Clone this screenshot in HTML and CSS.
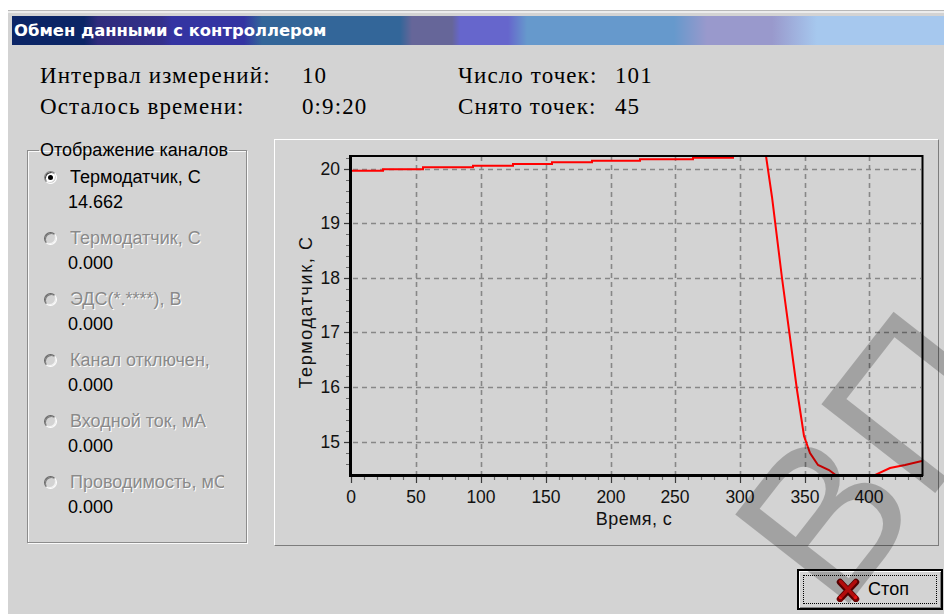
FILE: index.html
```html
<!DOCTYPE html>
<html lang="ru">
<head>
<meta charset="utf-8">
<title>Обмен данными с контроллером</title>
<link rel="stylesheet" href="styles.css">
</head>
<body>
<div class="window">
  <div class="titlebar">Обмен данными с контроллером</div>

  <div class="info">
    <span>Интервал измерений:</span><span>10</span><span>Число точек:</span><span>101</span>
    <span>Осталось времени:</span><span>0:9:20</span><span>Снято точек:</span><span>45</span>
  </div>

  <div class="main">
    <fieldset class="channels">
      <legend>Отображение каналов</legend>
      <div class="channel">
        <span class="radio checked"></span><span class="label">Термодатчик, С</span>
        <span class="value">14.662</span>
      </div>
      <div class="channel disabled">
        <span class="radio"></span><span class="label">Термодатчик, С</span>
        <span class="value">0.000</span>
      </div>
      <div class="channel disabled">
        <span class="radio"></span><span class="label">ЭДС(*.****), В</span>
        <span class="value">0.000</span>
      </div>
      <div class="channel disabled">
        <span class="radio"></span><span class="label">Канал отключен,</span>
        <span class="value">0.000</span>
      </div>
      <div class="channel disabled">
        <span class="radio"></span><span class="label">Входной ток, мА</span>
        <span class="value">0.000</span>
      </div>
      <div class="channel disabled">
        <span class="radio"></span><span class="label">Проводимость, мС</span>
        <span class="value">0.000</span>
      </div>
    </fieldset>

    <div class="chart-panel">
      <svg class="chart" width="663" height="405" viewBox="275 140 663 405">
        <defs>
          <clipPath id="plot-area"><rect x="351" y="156" width="571" height="319"/></clipPath>
        </defs>

        <!-- dashed grid -->
        <g class="grid">
          <path d="M344 169.5H921M344 223.5H921M344 278.5H921M344 332.5H921M344 387.5H921M344 442.5H921"/>
          <path d="M416.5 156V475M481.5 156V475M546.5 156V475M611.5 156V475M675.5 156V475M740.5 156V475M805.5 156V475M869.5 156V475"/>
        </g>

        <!-- minor ticks -->
        <path class="ticks" d="M346 158.5h3M346 180.5h3M346 191.5h3M346 202.5h3M346 213.5h3M346 234.5h3M346 245.5h3M346 256.5h3M346 267.5h3M346 289.5h3M346 300.5h3M346 311.5h3M346 322.5h3M346 343.5h3M346 354.5h3M346 365.5h3M346 376.5h3M346 398.5h3M346 409.5h3M346 420.5h3M346 431.5h3M346 453.5h3M346 464.5h3
          M364.5 477v3M377.5 477v3M390.5 477v3M403.5 477v3M429.5 477v3M442.5 477v3M455.5 477v3M468.5 477v3M494.5 477v3M507.5 477v3M520.5 477v3M533.5 477v3M559.5 477v3M572.5 477v3M585.5 477v3M598.5 477v3M624.5 477v3M637.5 477v3M649.5 477v3M662.5 477v3M688.5 477v3M701.5 477v3M714.5 477v3M727.5 477v3M753.5 477v3M766.5 477v3M779.5 477v3M792.5 477v3M818.5 477v3M831.5 477v3M843.5 477v3M856.5 477v3M882.5 477v3M895.5 477v3M908.5 477v3M920.5 477v3"/>
        <!-- major ticks -->
        <path class="ticks major" d="M344 169.5h5M344 223.5h5M344 278.5h5M344 332.5h5M344 387.5h5M344 442.5h5
          M351.5 477v6M416.5 477v6M481.5 477v6M546.5 477v6M611.5 477v6M675.5 477v6M740.5 477v6M805.5 477v6M869.5 477v6"/>

        <!-- measured temperature -->
        <polyline class="series" clip-path="url(#plot-area)" points="351,170.7 383,170.7 383,169.3 423,169.3 423,167.3 473,167.3 473,165.7 513,165.7 513,164 552,164 552,162.3 592,162.3 592,160.7 640,160.7 640,159.3 693,159.3 693,157.7 733,157.7 733,150 766,150 766,156 772,197 782,278 789,330 797,390 804,436 810,453 818,465 829,470 837,476 842,482 870,482 875,475 890,468 905,465 922,461"/>

        <!-- frame -->
        <path class="frame thin" d="M350 156H922.5V476"/>
        <path class="frame" d="M350.5 155V475.5H923"/>

        <!-- axis labels -->
        <g class="tick-label y">
          <text x="340" y="175">20</text>
          <text x="340" y="229">19</text>
          <text x="340" y="284">18</text>
          <text x="340" y="338">17</text>
          <text x="340" y="393">16</text>
          <text x="340" y="448">15</text>
        </g>
        <g class="tick-label x">
          <text x="351" y="503">0</text>
          <text x="416" y="503">50</text>
          <text x="481" y="503">100</text>
          <text x="546" y="503">150</text>
          <text x="611" y="503">200</text>
          <text x="675" y="503">250</text>
          <text x="740" y="503">300</text>
          <text x="805" y="503">350</text>
          <text x="869" y="503">400</text>
        </g>
        <text class="axis-title" x="634" y="525">Время, с</text>
        <text class="axis-title vertical" x="312" y="312" transform="rotate(-90 312 312)">Термодатчик, С</text>
      </svg>
    </div>
  </div>

  <div class="actions">
    <button class="btn-stop" type="button">
      <svg class="stop-icon" width="24" height="24" viewBox="0 0 24 24">
        <path class="x-shade" d="M4 4L20 21M20 4L4 21"/>
        <path class="x-face" d="M4.5 3.5L19.5 19.5M19.5 3.5L4.5 19.5"/>
      </svg>
      <span>Стоп</span>
    </button>
  </div>
</div>

<div class="watermark">ВП</div>
</body>
</html>
```

FILE: styles.css
```css
* {
  box-sizing: border-box;
}

html,
body {
  margin: 0;
  height: 100%;
}

body {
  position: relative;
  overflow: hidden;
  background: #ffffff;
  font-family: "Liberation Sans", Arial, sans-serif;
  color: #000;
}

/* dialog window */
.window {
  margin: 10px 0 0 8px;
  height: 604px;
  padding: 5px 0 0 4px;
  display: flex;
  flex-direction: column;
  background: #d3d3d3;
  border-top: 1px solid #b8b8b8;
  box-shadow: inset 0 2px 0 #ececec;
}

.titlebar {
  height: 29px;
  padding-left: 2px;
  display: flex;
  align-items: center;
  color: #fff;
  font-family: "DejaVu Sans", Verdana, sans-serif;
  font-weight: bold;
  font-size: 16.4px;
  white-space: nowrap;
  background: linear-gradient(90deg,
    #0b2566 0, #0b2566 72px,
    #2f2b7c 86px, #33308c 150px,
    #3434a2 160px, #3434a2 232px,
    #336699 250px, #336699 388px,
    #666699 400px, #666699 440px,
    #6666cc 448px, #6666cc 496px,
    #6699cc 515px, #6699cc 662px,
    #9999cc 695px, #9999cc 760px,
    #a6c8ee 805px, #a6c8ee 100%);
}

/* measurement summary */
.info {
  margin-top: 15px;
  padding-left: 28px;
  display: grid;
  grid-template-columns: 262px 156px 157px auto;
  grid-auto-rows: 31px;
  align-items: center;
  font-family: "Liberation Serif", "Times New Roman", serif;
  font-size: 23px;
  letter-spacing: 1.1px;
  white-space: nowrap;
}

.main {
  margin-top: 17px;
  display: flex;
  align-items: flex-start;
  gap: 27px;
}

/* channel selector group box */
.channels {
  margin: 1px 0 0 15px;
  width: 220px;
  height: 403px;
  padding: 5px 0 0 16px;
  border: 1px solid #8c8c8c;
  box-shadow: 1px 1px 0 #fafafa, inset 1px 1px 0 #fafafa;
  font-size: 18px;
}

.channels legend {
  padding: 0 1px;
  margin-left: -5px;
  line-height: 20px;
}

.channel {
  height: 61px;
  display: grid;
  grid-template-columns: 26px 154px;
  grid-template-rows: 25px 25px;
  align-items: center;
}

.radio {
  position: relative;
  width: 13px;
  height: 13px;
  border-radius: 50%;
  border: 1px solid;
  border-color: #808080 #ffffff #ffffff #808080;
  box-shadow: inset 1px 1px 0 #404040, inset -1px -1px 0 #d3d3d3;
  background: #ffffff;
}

.radio.checked::after {
  content: "";
  position: absolute;
  left: 3px;
  top: 3px;
  width: 5px;
  height: 5px;
  border-radius: 50%;
  background: #000;
}

.channel.disabled .radio {
  background: #d3d3d3;
  border-color: #666666 #ffffff #ffffff #666666;
  box-shadow: inset 1px 1px 0 #7c7c7c, inset -1px -1px 0 #f2f2f2;
}

.label {
  overflow: hidden;
  white-space: nowrap;
}

.channel.disabled .label {
  color: #8a8a8a;
  text-shadow: 1px 1px 0 #ffffff;
}

.value {
  grid-column: 2;
  margin-left: -2px;
}

/* chart */
.chart-panel {
  width: 665px;
  height: 407px;
  border: 1px solid;
  border-color: #ffffff #7c7c7c #7c7c7c #ffffff;
}

.chart {
  display: block;
}

.grid path {
  fill: none;
  stroke: #878787;
  stroke-width: 1.6;
  stroke-dasharray: 5 4;
}

.ticks {
  fill: none;
  stroke: #6a6a6a;
  stroke-width: 1.2;
}

.ticks.major {
  stroke: #3a3a3a;
}

.series {
  fill: none;
  stroke: #ff0000;
  stroke-width: 2;
}

.frame {
  fill: none;
  stroke: #000;
  stroke-width: 3;
}

.frame.thin {
  stroke-width: 2;
}

.chart text {
  font-family: "Liberation Sans", Arial, sans-serif;
  font-size: 17.5px;
  fill: #111;
}

.tick-label.y text {
  text-anchor: end;
}

.tick-label.x text,
.axis-title {
  text-anchor: middle;
}

.chart .axis-title {
  font-size: 18px;
  letter-spacing: 0.4px;
}

.chart .axis-title.vertical {
  letter-spacing: 1.6px;
}

/* bottom buttons */
.actions {
  margin-top: 23px;
  padding-right: 1px;
  display: flex;
  justify-content: flex-end;
}

.btn-stop {
  width: 146px;
  height: 41px;
  padding: 0;
  display: flex;
  align-items: center;
  justify-content: center;
  gap: 8px;
  font-family: "Liberation Sans", Arial, sans-serif;
  font-size: 18px;
  color: #000;
  background: #d3d3d3;
  border: 2px solid #000;
  box-shadow: inset 1px 1px 0 #ffffff, inset -1px -1px 0 #808080;
  outline: 1px dotted #000;
  outline-offset: -7px;
}

.stop-icon {
  margin-left: 5px;
}

.x-shade {
  fill: none;
  stroke: #6e0000;
  stroke-width: 6.5;
  stroke-linecap: round;
}

.x-face {
  fill: none;
  stroke: #e81010;
  stroke-width: 3.5;
  stroke-linecap: round;
}

/* diagonal stamp drawn over the whole dialog */
.watermark {
  position: absolute;
  left: 699px;
  top: 508px;
  font-family: "Liberation Sans", Arial, sans-serif;
  font-size: 210px;
  line-height: 1;
  color: rgba(0, 0, 0, 0.23);
  white-space: nowrap;
  transform: rotate(-52deg);
  transform-origin: 0 0;
  pointer-events: none;
}
```
